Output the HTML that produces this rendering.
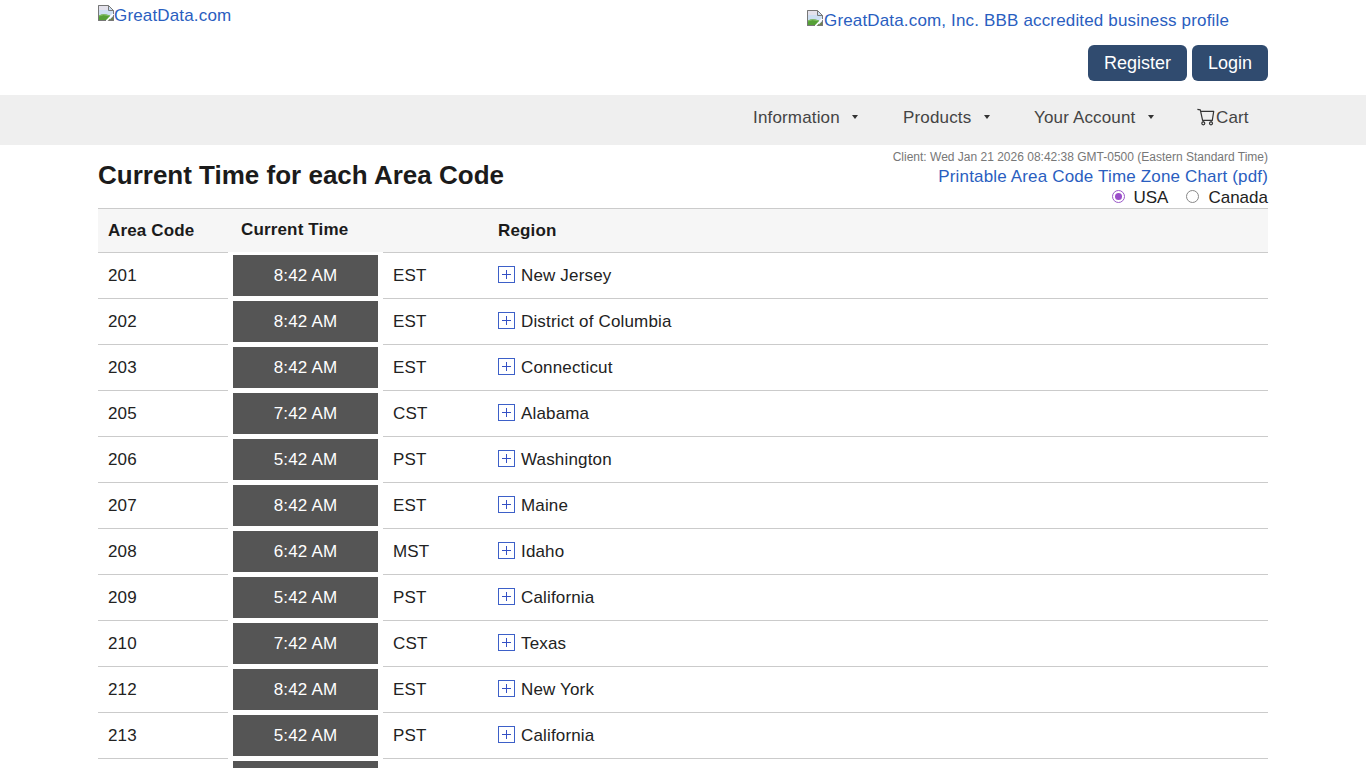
<!DOCTYPE html>
<html><head><meta charset="utf-8">
<style>
*{box-sizing:border-box;margin:0;padding:0}
html,body{width:1366px;height:768px;overflow:hidden;background:#fff}
body{font-family:"Liberation Sans",sans-serif;color:#222;position:relative}
.abs{position:absolute;white-space:nowrap}
a,.lnk{color:#2a5ec0;text-decoration:none;letter-spacing:0.16px}
.bimg{display:inline-block;width:16px;height:16px;vertical-align:top}
.btn{position:absolute;top:45px;height:36px;background:#304b6f;color:#fff;border-radius:6px;font-size:18px;line-height:37px;text-align:center}
.nav{position:absolute;left:0;top:95px;width:1366px;height:50px;background:#efefef}
.ni{position:absolute;top:-2px;font-size:17px;line-height:50px;color:#444;white-space:nowrap;letter-spacing:0.16px}
.caret{position:absolute;top:115px;width:0;height:0;border-left:3px solid transparent;border-right:3px solid transparent;border-top:4px solid #333}
.hdr{position:absolute;left:98px;top:208px;width:1170px;height:45px;background:#f6f6f6;border-top:1px solid #cbcbcb;border-bottom:1px solid #cbcbcb}
.th{position:absolute;font-weight:bold;font-size:17px;color:#1b1b1b;white-space:nowrap;letter-spacing:0.15px}
.row{position:absolute;left:98px;width:1170px;height:46px;border-bottom:1px solid #cbcbcb;font-size:17px;color:#222;letter-spacing:0.16px}
.row .c{position:absolute;top:0;line-height:45px;white-space:nowrap}
.mask{position:absolute;left:130px;top:-1px;width:155px;height:47px;background:#fff}
.tbox{position:absolute;left:135px;top:2px;width:145px;height:41px;background:#555;color:#fff;text-align:center;line-height:41px}
.plus{position:absolute;left:400px;top:13px;width:17px;height:17px;border:1px solid #3d60c8}
.plus:before{content:"";position:absolute;left:3px;top:7px;width:9px;height:1px;background:#3450c4}
.plus:after{content:"";position:absolute;left:7px;top:3px;width:1px;height:9px;background:#3450c4}
</style></head>
<body>
<!-- header -->
<div class="abs" style="left:98px;top:5px;width:16px;height:16px"><svg width="16" height="16" viewBox="0 0 16 16"><path d="M0.5 0.5H10.5L15.5 5.5V15.5H0.5Z" fill="#cddff2" stroke="#777"/><path d="M1 1H10.5V5H1Z" fill="#e4e2ec"/><path d="M1 15V10.5Q5 7.8 12 10.5V15Z" fill="#55a036"/><path d="M1 11Q5 8.6 11 10.8" fill="none" stroke="#8cc46a" stroke-width="0.8"/><path d="M11 15.5L15.5 11V15.5Z" fill="#6f7f4c"/><path d="M7.8 16.5L16.2 8" stroke="#fff" stroke-width="1.7"/><path d="M10.5 0.5V5.5H15.5" fill="none" stroke="#777"/><path d="M0.5 0.5V15.5H8M12 15.5H15.5V11M15.5 9V5.5" fill="none" stroke="#777"/></svg></div>
<div class="abs lnk" style="left:114px;top:6px;font-size:17px;line-height:20px">GreatData.com</div>
<div class="abs" style="left:807px;top:10px;width:16px;height:16px"><svg width="16" height="16" viewBox="0 0 16 16"><path d="M0.5 0.5H10.5L15.5 5.5V15.5H0.5Z" fill="#cddff2" stroke="#777"/><path d="M1 1H10.5V5H1Z" fill="#e4e2ec"/><path d="M1 15V10.5Q5 7.8 12 10.5V15Z" fill="#55a036"/><path d="M1 11Q5 8.6 11 10.8" fill="none" stroke="#8cc46a" stroke-width="0.8"/><path d="M11 15.5L15.5 11V15.5Z" fill="#6f7f4c"/><path d="M7.8 16.5L16.2 8" stroke="#fff" stroke-width="1.7"/><path d="M10.5 0.5V5.5H15.5" fill="none" stroke="#777"/><path d="M0.5 0.5V15.5H8M12 15.5H15.5V11M15.5 9V5.5" fill="none" stroke="#777"/></svg></div>
<div class="abs lnk" style="left:824px;top:11px;font-size:17px;line-height:20px">GreatData.com, Inc. BBB accredited business profile</div>
<div class="btn" style="left:1088px;width:99px">Register</div>
<div class="btn" style="left:1192px;width:76px">Login</div>

<div class="nav">
 <span class="ni" style="left:753px">Information</span>
 <span class="ni" style="left:903px">Products</span>
 <span class="ni" style="left:1034px">Your Account</span>
 <span class="ni" style="left:1216px">Cart</span>
 <svg style="position:absolute;left:1196px;top:13px" width="20" height="18" viewBox="0 0 20 18"><path d="M1.4 1.3L4.3 1.8L6.6 12.3H16.3L17.7 3.4H4.6" fill="none" stroke="#333" stroke-width="1.2" stroke-linejoin="round"/><path d="M7.2 12.3V13.8M15.2 12.3V13.8" stroke="#333" stroke-width="1.2"/><circle cx="7.3" cy="15.3" r="1.5" fill="none" stroke="#333" stroke-width="1.2"/><circle cx="15" cy="15.3" r="1.5" fill="none" stroke="#333" stroke-width="1.2"/></svg>
</div>
<div class="caret" style="left:852px"></div>
<div class="caret" style="left:984px"></div>
<div class="caret" style="left:1148px"></div>

<!-- title area -->
<div class="abs" style="left:98px;top:160px;font-size:26px;font-weight:bold;color:#1b1b1b;line-height:30px">Current Time for each Area Code</div>
<div class="abs" style="right:98px;top:150px;font-size:12px;color:#777;line-height:14px">Client: Wed Jan 21 2026 08:42:38 GMT-0500 (Eastern Standard Time)</div>
<div class="abs" style="right:98px;top:167px;font-size:17px;line-height:20px"><a href="#">Printable Area Code Time Zone Chart (pdf)</a></div>
<div class="abs" style="right:98px;top:188px;font-size:17px;line-height:20px;color:#222">
 <span style="display:inline-block;width:13px;height:13px;border-radius:50%;border:1px solid #9b59c9;background:#fff;position:relative;vertical-align:0px;margin-right:8px"><span style="position:absolute;left:2px;top:2px;width:7px;height:7px;border-radius:50%;background:#9b4dca"></span></span>USA<span style="display:inline-block;width:13px;height:13px;border-radius:50%;border:1px solid #888;background:#fff;vertical-align:0px;margin-left:18px;margin-right:9px"></span>Canada</div>

<!-- table -->
<div class="hdr">
 <span class="th" style="left:10px;top:12px">Area Code</span>
 <span class="th" style="left:143px;top:11px">Current Time</span>
 <span class="th" style="left:400px;top:12px">Region</span>
</div>
<div id="rows"></div>
<div class="row" style="top:253px"><div class="mask"></div><span class="c" style="left:10px">201</span><div class="tbox">8:42 AM</div><span class="c" style="left:295px">EST</span><div class="plus"></div><span class="c" style="left:423px">New Jersey</span></div>
<div class="row" style="top:299px"><div class="mask"></div><span class="c" style="left:10px">202</span><div class="tbox">8:42 AM</div><span class="c" style="left:295px">EST</span><div class="plus"></div><span class="c" style="left:423px">District of Columbia</span></div>
<div class="row" style="top:345px"><div class="mask"></div><span class="c" style="left:10px">203</span><div class="tbox">8:42 AM</div><span class="c" style="left:295px">EST</span><div class="plus"></div><span class="c" style="left:423px">Connecticut</span></div>
<div class="row" style="top:391px"><div class="mask"></div><span class="c" style="left:10px">205</span><div class="tbox">7:42 AM</div><span class="c" style="left:295px">CST</span><div class="plus"></div><span class="c" style="left:423px">Alabama</span></div>
<div class="row" style="top:437px"><div class="mask"></div><span class="c" style="left:10px">206</span><div class="tbox">5:42 AM</div><span class="c" style="left:295px">PST</span><div class="plus"></div><span class="c" style="left:423px">Washington</span></div>
<div class="row" style="top:483px"><div class="mask"></div><span class="c" style="left:10px">207</span><div class="tbox">8:42 AM</div><span class="c" style="left:295px">EST</span><div class="plus"></div><span class="c" style="left:423px">Maine</span></div>
<div class="row" style="top:529px"><div class="mask"></div><span class="c" style="left:10px">208</span><div class="tbox">6:42 AM</div><span class="c" style="left:295px">MST</span><div class="plus"></div><span class="c" style="left:423px">Idaho</span></div>
<div class="row" style="top:575px"><div class="mask"></div><span class="c" style="left:10px">209</span><div class="tbox">5:42 AM</div><span class="c" style="left:295px">PST</span><div class="plus"></div><span class="c" style="left:423px">California</span></div>
<div class="row" style="top:621px"><div class="mask"></div><span class="c" style="left:10px">210</span><div class="tbox">7:42 AM</div><span class="c" style="left:295px">CST</span><div class="plus"></div><span class="c" style="left:423px">Texas</span></div>
<div class="row" style="top:667px"><div class="mask"></div><span class="c" style="left:10px">212</span><div class="tbox">8:42 AM</div><span class="c" style="left:295px">EST</span><div class="plus"></div><span class="c" style="left:423px">New York</span></div>
<div class="row" style="top:713px"><div class="mask"></div><span class="c" style="left:10px">213</span><div class="tbox">5:42 AM</div><span class="c" style="left:295px">PST</span><div class="plus"></div><span class="c" style="left:423px">California</span></div>
<div class="row" style="top:759px"><div class="mask"></div><span class="c" style="left:10px">214</span><div class="tbox">7:42 AM</div><span class="c" style="left:295px">CST</span><div class="plus"></div><span class="c" style="left:423px">Texas</span></div>
</body></html>
